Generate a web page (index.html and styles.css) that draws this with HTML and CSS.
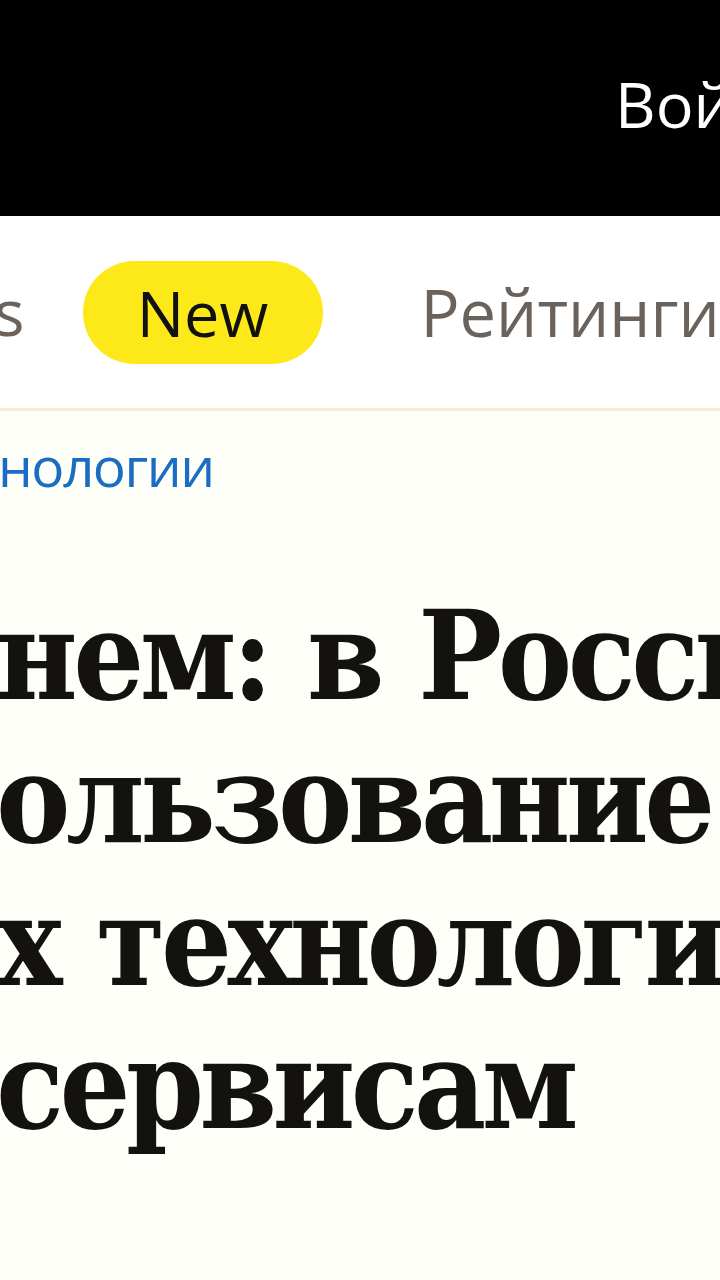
FILE: index.html
```html
<!DOCTYPE html>
<html lang="ru">
<head>
    <meta charset="UTF-8">
    <meta name="viewport" content="width=device-width, initial-scale=1.0">
    <title>Технологии</title>
    <link rel="stylesheet" href="styles.css">
</head>
<body>
    <header class="topbar">
        <a class="login" href="#">Войти</a>
    </header>

    <nav class="menu">
        <span class="menu-item menu-cut">s</span>
        <span class="badge">New</span>
        <span class="menu-item menu-wide">Рейтинги</span>
    </nav>

    <main class="article">
        <div class="category">нологии</div>
        <h1 class="title">
            <span class="title-line">нем: в России</span>
            <span class="title-line">ользование</span>
            <span class="title-line">х технологий</span>
            <span class="title-line">сервисам</span>
        </h1>
    </main>
</body>
</html>
```

FILE: styles.css
```css
body {
    margin: 0;
    width: 720px;
    height: 1280px;
    overflow: hidden;
    background-color: #fffffa;
    font-family: "Open Sans", "Noto Sans", sans-serif;
}
.topbar {
    height: 216px;
    background: #000;
    display: flex;
    align-items: center;
    padding-left: 615px;
    white-space: nowrap;
}
.login {
    color: #fff;
    text-decoration: none;
    font-size: 63px;
    line-height: 1;
    margin-top: -10px;
}
.menu {
    height: 192px;
    background: #fff;
    border-bottom: 3px solid #fce8da;
    display: flex;
    align-items: center;
    white-space: nowrap;
    color: #6b635b;
    font-size: 64px;
}
.menu-item {
    line-height: 1;
    flex-shrink: 0;
}
.menu-cut {
    margin-left: -6px;
}
.badge {
    flex-shrink: 0;
    margin-left: 58px;
    width: 240px;
    height: 103px;
    border-radius: 52px;
    background: #fde81a;
    color: #111;
    display: flex;
    align-items: center;
    justify-content: center;
    font-size: 63px;
}
.menu-wide {
    margin-left: 98px;
    font-size: 65px;
}
.article {
    padding-top: 15px;
    white-space: nowrap;
}
.category {
    color: #1a6dc2;
    font-size: 55px;
    letter-spacing: -1.5px;
    line-height: 80px;
    margin-left: -2px;
}
.title {
    margin: 78px 0 0 -4px;
    font-family: "DejaVu Serif", "Liberation Serif", serif;
    font-stretch: condensed;
    font-weight: bold;
    font-size: 124px;
    letter-spacing: -4.5px;
    word-spacing: 4px;
    line-height: 143px;
    color: #141210;
}
.title-line {
    display: block;
}
```
